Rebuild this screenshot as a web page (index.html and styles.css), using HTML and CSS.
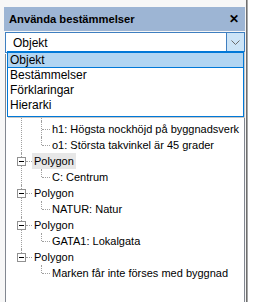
FILE: index.html
```html
<!DOCTYPE html>
<html lang="sv">
<head>
  <meta charset="UTF-8">
  <title>Använda bestämmelser</title>
  <link rel="stylesheet" href="styles.css">
</head>
<body>
  <div class="panel">
    <!-- Titelrad -->
    <div class="titlebar">
      <span class="title">Använda bestämmelser</span>
      <span class="close">✕</span>
    </div>

    <!-- Vy-väljare -->
    <div class="combo">
      <span class="combo-text">Objekt</span>
      <span class="combo-btn">
        <svg width="9" height="5" viewBox="0 0 9 5"><path d="M0.5 0.5 L4.5 4.5 L8.5 0.5" fill="none" stroke="#6b6b6b" stroke-width="1"/></svg>
      </span>
    </div>

    <!-- Trädet (översta raderna ligger under den öppna listan) -->
    <div class="tree-box">
      <ul class="tree">
        <li class="node first">
          <div class="row root"><span class="toggle"></span><span class="label"></span></div>
          <ul class="children">
            <li class="leaf last"><span class="label"></span></li>
          </ul>
        </li>
        <li class="node">
          <div class="row root"><span class="toggle"></span><span class="label"></span></div>
          <ul class="children">
            <li class="leaf"><span class="label"></span></li>
            <li class="leaf"><span class="label">h1: Högsta nockhöjd på byggnadsverk</span></li>
            <li class="leaf last"><span class="label">o1: Största takvinkel är 45 grader</span></li>
          </ul>
        </li>
        <li class="node">
          <div class="row root"><span class="toggle"></span><span class="label selected">Polygon</span></div>
          <ul class="children">
            <li class="leaf last"><span class="label">C: Centrum</span></li>
          </ul>
        </li>
        <li class="node">
          <div class="row root"><span class="toggle"></span><span class="label">Polygon</span></div>
          <ul class="children">
            <li class="leaf last"><span class="label">NATUR: Natur</span></li>
          </ul>
        </li>
        <li class="node">
          <div class="row root"><span class="toggle"></span><span class="label">Polygon</span></div>
          <ul class="children">
            <li class="leaf last"><span class="label">GATA1: Lokalgata</span></li>
          </ul>
        </li>
        <li class="node last">
          <div class="row root"><span class="toggle"></span><span class="label">Polygon</span></div>
          <ul class="children">
            <li class="leaf last"><span class="label">Marken får inte förses med byggnad</span></li>
          </ul>
        </li>
      </ul>
    </div>

    <!-- Öppen lista -->
    <ul class="dropdown">
      <li class="active">Objekt</li>
      <li>Bestämmelser</li>
      <li>Förklaringar</li>
      <li>Hierarki</li>
    </ul>
  </div>
</body>
</html>
```

FILE: styles.css
```css
body {
  margin: 0;
  background-color: #fff;
  font-family: "Liberation Sans", Arial, sans-serif;
  font-size: 12px;
  color: #000;
}
.panel {
  position: relative;
  box-sizing: border-box;
  width: 247px;
  height: 302px;
  padding: 7px 1px 0 4px;
  background-color: #f7f7f7;
  border-right: 1px solid #6e6e6e;
  box-shadow: 1px 0 0 #a9a9a9;
  display: flex;
  flex-direction: column;
}

/* Titelrad */
.titlebar {
  height: 24px;
  flex-shrink: 0;
  display: flex;
  align-items: center;
  justify-content: space-between;
  padding: 0 6px 0 5px;
  background-color: #9db5d4;
}
.title {
  font-weight: bold;
  font-size: 11.2px;
}
.close {
  font-weight: bold;
  font-size: 12px;
}

/* Combobox */
.combo {
  margin: 1px 0 0 1px;
  height: 21px;
  flex-shrink: 0;
  box-sizing: border-box;
  border: 1px solid #3f7fc0;
  background-color: #fff;
  display: flex;
  align-items: center;
}
.combo-text {
  flex-grow: 1;
  padding-left: 7px;
}
.combo-btn {
  width: 17px;
  height: 19px;
  border-left: 1px solid #3f7fc0;
  background-color: #cce4f7;
  display: flex;
  align-items: center;
  justify-content: center;
}

/* Träd */
.tree-box {
  flex-grow: 1;
  margin: 1px 0 0 1px;
  border-left: 1px solid #828790;
  border-right: 1px solid #828790;
  background-color: #fff;
  padding-top: 3px;
  font-size: 11px;
}
.tree,
.children {
  list-style: none;
  margin: 0;
  padding: 0;
}
.node {
  position: relative;
}
.node::before {
  content: "";
  position: absolute;
  left: 15px;
  top: 0;
  bottom: 0;
  border-left: 1px dotted #a0a0a0;
}
.node.first::before {
  top: 8px;
}
.node.last::before {
  bottom: auto;
  height: 8px;
}
.row {
  height: 16px;
  display: flex;
  align-items: center;
  position: relative;
}
.toggle {
  position: relative;
  z-index: 1;
  box-sizing: border-box;
  width: 9px;
  height: 9px;
  margin-left: 11px;
  border: 1px solid #919191;
  background-color: #fff;
}
.toggle::after {
  content: "";
  position: absolute;
  left: 1px;
  top: 3px;
  width: 5px;
  height: 1px;
  background-color: #000;
}
.root::after {
  content: "";
  position: absolute;
  left: 20px;
  top: 8px;
  width: 6px;
  border-top: 1px dotted #a0a0a0;
}
.root .label {
  margin-left: 6px;
}
.label {
  padding: 0 2px;
  line-height: 16px;
  white-space: nowrap;
}
.label.selected {
  background-color: #e7e7e7;
}
.leaf {
  position: relative;
  height: 16px;
  display: flex;
  align-items: center;
  padding-left: 44px;
}
.leaf::before {
  content: "";
  position: absolute;
  left: 35px;
  top: 0;
  bottom: 0;
  border-left: 1px dotted #a0a0a0;
}
.leaf.last::before {
  bottom: auto;
  height: 8px;
}
.leaf::after {
  content: "";
  position: absolute;
  left: 36px;
  top: 8px;
  width: 8px;
  border-top: 1px dotted #a0a0a0;
}

/* Öppen lista */
.dropdown {
  position: absolute;
  z-index: 5;
  left: 7px;
  top: 51px;
  width: 237px;
  box-sizing: border-box;
  margin: 0;
  padding: 0 0 3px 0;
  list-style: none;
  background-color: #fff;
  border: 1px solid #0078d7;
  box-shadow: 1px 1px 0 #c8c8c8;
}
.dropdown li {
  height: 15px;
  line-height: 15px;
  padding-left: 2px;
}
.dropdown li.active {
  background-color: #b1d5f2;
  border-top: 1px solid #0078d7;
  border-bottom: 1px solid #0078d7;
  height: 14px;
  line-height: 14px;
}
```
